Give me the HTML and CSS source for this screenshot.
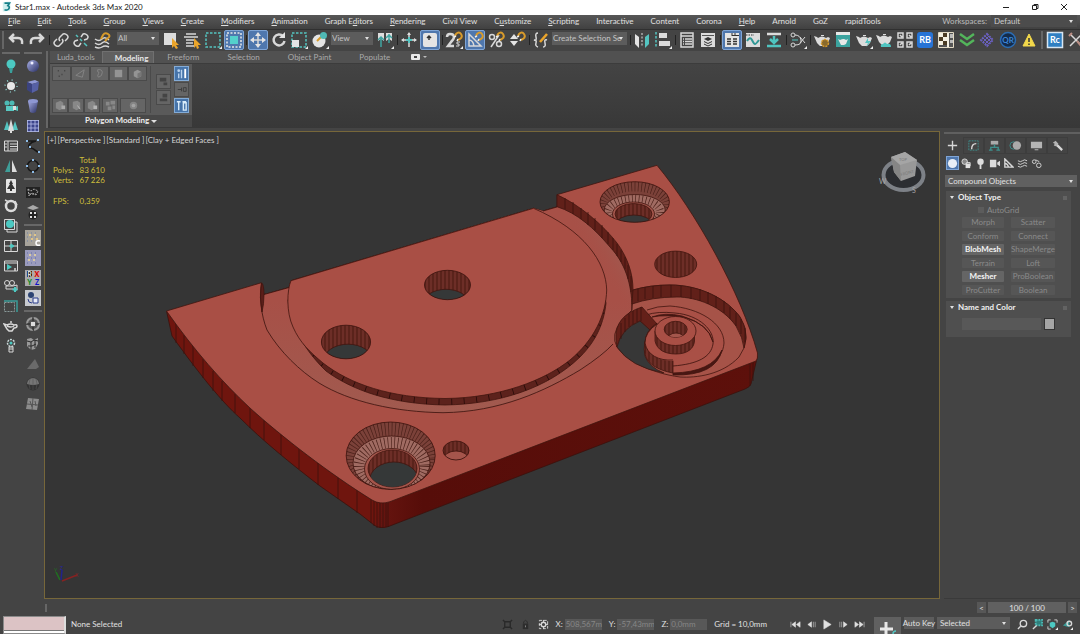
FILE: index.html
```html
<!DOCTYPE html>
<html lang="en">

<head>
    <meta charset="utf-8">
    <title>Star1.max - Autodesk 3ds Max 2020</title>
    <link rel="stylesheet" href="styles.css">
</head>

<body>
    <!-- shared symbols -->
    <svg class="defs" width="0" height="0" aria-hidden="true">
        <defs>
            <linearGradient id="ball" x1="0" y1="0" x2="1" y2="1">
                <stop offset="0" stop-color="#a9b0e6" />
                <stop offset="1" stop-color="#272d60" />
            </linearGradient>
            <symbol id="teapot" viewBox="0 0 18 18">
                <path d="M1 5l3 1 1 1q4-3 8 0l2-1 2 1-2 5-3 3H7L4 12z" />
                <path d="M8 4h3v1H8z" />
            </symbol>
            <symbol id="magnet" viewBox="0 0 18 18">
                <path d="M10 5l1-2q3-3 5 0t-1 5l-2 1" fill="none" stroke="#d99b2b" stroke-width="2" />
                <path d="M9 6l2-1M12 10l1-2" stroke="#eee" stroke-width="1.5" />
            </symbol>
            <symbol id="flyout" viewBox="0 0 18 18">
                <path d="M18 15v3h-3z" fill="#eee" />
            </symbol>
        </defs>
    </svg>

    <header class="titlebar">
        <svg class="logo" viewBox="0 0 12 12"><path d="M1 1l9-1v11l-9 1z" fill="#cfeeee" /><path d="M3 2h6l-2 3q3 1 1 4-2 2-5 1" fill="none" stroke="#16808a" stroke-width="2" /></svg>
        <span class="caption">Star1.max - Autodesk 3ds Max 2020</span>
        <div class="window_buttons">
            <button aria-label="Minimize"><svg viewBox="0 0 8 8"><path d="M1 4.5h6" /></svg></button>
            <button aria-label="Restore"><svg viewBox="0 0 8 8"><path d="M1.5 2.5h4v4h-4zM3 2.5v-1h4v4H6" /></svg></button>
            <button aria-label="Close"><svg viewBox="0 0 8 8"><path d="M1 1l6 6M7 1L1 7" /></svg></button>
        </div>
    </header>

    <nav class="menubar">
        <a href="#"><u>F</u>ile</a>
        <a href="#"><u>E</u>dit</a>
        <a href="#"><u>T</u>ools</a>
        <a href="#"><u>G</u>roup</a>
        <a href="#"><u>V</u>iews</a>
        <a href="#"><u>C</u>reate</a>
        <a href="#"><u>M</u>odifiers</a>
        <a href="#"><u>A</u>nimation</a>
        <a href="#">Graph E<u>d</u>itors</a>
        <a href="#"><u>R</u>endering</a>
        <a href="#">Civil View</a>
        <a href="#">C<u>u</u>stomize</a>
        <a href="#"><u>S</u>cripting</a>
        <a href="#">Interactive</a>
        <a href="#">Content</a>
        <a href="#">Corona</a>
        <a href="#"><u>H</u>elp</a>
        <a href="#">Arnold</a>
        <a href="#">GoZ</a>
        <a href="#">rapidTools</a>
        <label for="workspace">Workspaces:</label>
        <span class="combo workspace"><select id="workspace"><option>Default</option></select></span>
    </nav>

    <div class="toolbar">
        <i class="grip"></i>
        <div class="group">
            <button aria-label="Undo"><svg viewBox="0 0 18 18"><path d="M7 3L3 7l4 4M3 7h8q5 0 4 6" class="line bold" /></svg></button>
            <button aria-label="Redo"><svg viewBox="0 0 18 18"><path d="M11 3l4 4-4 4M15 7H7q-5 0-4 6" class="line bold" /></svg></button>
        </div>
        <i class="sep"></i>
        <div class="group">
            <button aria-label="Link"><svg viewBox="0 0 18 18"><g class="line wide"><path d="M8 10q-2-2 0-4l3-3q2-1 4 1t0 4l-2 2" /><path d="M10 8q2 2 0 4l-3 3q-2 1-4-1t0-4l2-2" /></g></svg></button>
            <button aria-label="Unlink"><svg viewBox="0 0 18 18"><path d="M9 6l2-3q2-1 4 1t0 4l-3 1M9 12l-2 3q-2 1-4-1t0-4l3-1" class="line wide" /><path d="M4 4l2 2M8 8l2 2M12 12l3 3" stroke="#54c4c0" stroke-width="1.5" /></svg></button>
            <button aria-label="Bind to Space Warp"><svg viewBox="0 0 18 18"><path d="M2 8q4 3 7 0t7 1M2 12q4 3 7 0t7 1M2 16q4 2 7 0t7 0" class="line wide" /><path d="M8 8l2-4q2-3 5-1t0 4l-3 3" fill="none" stroke="#d99b2b" stroke-width="2" /></svg></button>
        </div>
        <span class="combo"><select aria-label="Selection filter"><option>All</option></select></span>
        <div class="group">
            <button aria-label="Select Object"><svg viewBox="0 0 18 18"><path d="M2 2h12v12H2z" fill="#dcdcdc" /><path d="M10 7v10l2-2 2 3 2-1-2-3h3z" fill="#eba52b" /></svg></button>
            <button aria-label="Select by Name"><svg viewBox="0 0 18 18"><path d="M3 3h10M1 6h14M3 9h9M3 12h7M3 15h8" class="line wide" /><path d="M11 7v10l2-2 1 3 2-1-1-3h3z" fill="#eba52b" /></svg></button>
            <button aria-label="Rectangular Selection"><svg viewBox="0 0 18 18"><path d="M2 2h14v14H2z" fill="none" stroke="#54c4c0" stroke-width="1.5" stroke-dasharray="2.5 1.5" /><use href="#flyout" /></svg></button>
            <button class="active" aria-label="Window Crossing"><svg viewBox="0 0 18 18"><path d="M2 2h14v14H2z" fill="none" stroke="#e8e8e8" stroke-width="1.5" stroke-dasharray="2 1.5" /><path d="M5 5h8v8H5z" fill="#54d0cc" /></svg></button>
        </div>
        <i class="sep"></i>
        <div class="group">
            <button class="active" aria-label="Move"><svg viewBox="0 0 18 18"><path d="M9 3v12M3 9h12" class="line wide" /><path d="M9 1l3 4H6zM9 17l3-4H6zM1 9l4-3v6zM17 9l-4-3v6z" fill="#e4e4e4" /></svg></button>
            <button aria-label="Rotate"><svg viewBox="0 0 18 18"><path d="M13 5a5.5 5.5 0 1 0 1.500 5" class="line bold" /><path d="M15 1v6H9z" fill="#e4e4e4" /></svg></button>
            <button aria-label="Scale"><svg viewBox="0 0 18 18"><path d="M2 2h14v14H2z" fill="none" stroke="#54c4c0" stroke-width="1.5" stroke-dasharray="2.5 1.5" /><path d="M2 9h7v7H2z" fill="#e4e4e4" /><use href="#flyout" /></svg></button>
            <button aria-label="Place"><svg viewBox="0 0 18 18"><circle cx="8" cy="10" r="6.5" fill="#e4e4e4" /><path d="M6 10l5-5" stroke="#d99b2b" stroke-width="2" /><circle cx="12.5" cy="4.5" r="3.5" fill="#4fb9b5" /><use href="#flyout" /></svg></button>
        </div>
        <span class="combo"><select aria-label="Reference coordinate system"><option>View</option></select></span>
        <div class="group">
            <button aria-label="Use Pivot Point Center"><svg viewBox="0 0 18 18"><path d="M2 2h6v8l-3-2-3 2zM10 2h6v8l-3-2-3 2z" fill="#dcdcdc" /><path d="M5 6v10M2 9l3-3 3 3M13 3v9M10 7l3-3 3 3" fill="none" stroke="#3fa5a1" stroke-width="1.5" /><use href="#flyout" /></svg></button>
        </div>
        <i class="sep"></i>
        <div class="group">
            <button aria-label="Manipulate"><svg viewBox="0 0 18 18"><path d="M9 2v14M2 9h14" stroke="#dcdcdc" stroke-width="1.5" /><path d="M9 6v6M6 9h6" stroke="#54c4c0" stroke-width="2" /><path d="M7 4h4L9 1zM1 9l3-2v4zM17 9l-3-2v4z" fill="#dcdcdc" /></svg></button>
            <button class="active" aria-label="Keyboard Override"><svg viewBox="0 0 18 18"><rect x="2" y="2" width="14" height="14" rx="2" fill="#e4e4e4" /><path d="M8 9V5M6 7l2-2 2 2" fill="none" stroke="#333" stroke-width="1.5" /></svg></button>
        </div>
        <i class="sep"></i>
        <div class="group">
            <button aria-label="Snaps Toggle"><svg viewBox="0 0 18 18"><path d="M2 6q0-3 3-3 4 0 4 3 0 2-3 5l-3 4h6" class="line bold" /><path d="M15 11h-3v2h2v2h-3" class="line" /><use href="#magnet" /><use href="#flyout" /></svg></button>
            <button class="active" aria-label="Angle Snap"><svg viewBox="0 0 18 18"><path d="M3 3v12h12zM3 9q4 0 5 6" class="line wide" /><use href="#magnet" /></svg></button>
            <button aria-label="Percent Snap"><svg viewBox="0 0 18 18"><circle cx="5" cy="6" r="2.500" class="line wide" /><circle cx="12" cy="13" r="2.500" class="line wide" /><path d="M12 4L4 16" class="line wide" /><use href="#magnet" /></svg></button>
            <button aria-label="Spinner Snap"><svg viewBox="0 0 18 18"><path d="M6 3l4 5H2zM6 15l4-5H2z" fill="#e4e4e4" /><use href="#magnet" /></svg></button>
        </div>
        <i class="sep"></i>
        <div class="group">
            <button aria-label="Edit Named Selection Sets"><svg viewBox="0 0 18 18"><path d="M6 2Q3 2 4 6T2 9q3 0 2 3t2 4M11 16q3 0 2-4t2-3" class="line wide" /><path d="M8 11l7-8" stroke="#eba52b" stroke-width="2.5" /></svg></button>
        </div>
        <span class="combo"><select aria-label="Named selection sets"><option>Create Selection Se</option></select></span>
        <i class="sep"></i>
        <div class="group">
            <button aria-label="Mirror"><svg viewBox="0 0 18 18"><path d="M2 3l4 3v11l-4-4z" fill="#e4e4e4" /><path d="M16 3l-4 3v11l4-4z" fill="#54c4c0" /><path d="M9 2v14" stroke="#ddd" stroke-dasharray="2 1.5" /></svg></button>
            <button aria-label="Align"><svg viewBox="0 0 18 18"><path d="M2 1v16" stroke="#54c4c0" stroke-width="1.5" stroke-dasharray="2.5 1.5" /><path d="M5 2h8v5H5zM5 10h11v5H5z" fill="#dcdcdc" /><use href="#flyout" /></svg></button>
        </div>
        <i class="sep"></i>
        <div class="group">
            <button aria-label="Scene Explorer"><svg viewBox="0 0 18 18"><path d="M3 2h12v14H3zM3 5h12M7 8h7M7 10.5h7M7 13h7M5 8h1M5 10.5h1M5 13h1" class="line wide" /></svg></button>
            <button aria-label="Layer Explorer"><svg viewBox="0 0 18 18"><path d="M2 2h14v14H2z" fill="#dcdcdc" /><path d="M3 4.500h12" stroke="#555" /><path d="M9 6l4 2-4 2-4-2zM5 10l4 2 4-2v1l-4 2-4-2zM5 12.500l4 2 4-2v1l-4 2-4-2z" fill="#333" /></svg></button>
        </div>
        <i class="sep"></i>
        <div class="group">
            <button class="active" aria-label="Toggle Ribbon"><svg viewBox="0 0 18 18"><path d="M2 2h14v14H2z" fill="#e4e4e4" /><path d="M4 8h4M4 10.5h4M4 13h4M10 8h4M10 10.5h4M10 13h4" stroke="#333" stroke-width="1.5" /><path d="M9 2v3M12 2v3M9 4.5h7" stroke="#333" /></svg></button>
            <button aria-label="Curve Editor"><svg viewBox="0 0 18 18"><path d="M2 2h14v14H2z" fill="#dcdcdc" /><path d="M2 4h8" stroke="#333" stroke-dasharray="1.5 1" /><path d="M3 10q3-5 5-1t3 4 4-4" fill="none" stroke="#319895" stroke-width="2" /></svg></button>
            <button aria-label="Schematic View"><svg viewBox="0 0 18 18"><path d="M2 3h14" stroke="#dcdcdc" stroke-width="2.5" /><path d="M2 15h14M9 5v6M5 8l4 4 4-4" fill="none" stroke="#4fc4c0" stroke-width="2.5" /></svg></button>
        </div>
        <i class="sep"></i>
        <div class="group">
            <button aria-label="Material Editor"><svg viewBox="0 0 18 18"><circle cx="4" cy="4" r="2" class="line" /><circle cx="4" cy="14" r="2" class="line" /><path d="M6 4q5 0 6 5t-6 5M11 6l5 6M16 6l-5 6" class="line" /><path d="M3 9h6" stroke="#54c4c0" /><use href="#flyout" /></svg></button>
        </div>
        <i class="sep"></i>
        <div class="group">
            <button aria-label="Render Setup"><svg viewBox="0 0 18 18" fill="#dcdcdc"><use href="#teapot" /><circle cx="12" cy="12" r="3.5" fill="#8a6a2c" stroke="#d99b2b" stroke-width="1.5" stroke-dasharray="2 1" /></svg></button>
            <button aria-label="Rendered Frame Window"><svg viewBox="0 0 18 18" fill="#e8e8e8"><path d="M2 2h14v14H2z" fill="#3ba39f" /><path d="M2 1h14v3H2z" /><path d="M4 8l2 1q4-2 6 0l2-1-2 5-2 1H7z" /></svg></button>
            <button aria-label="Render Production"><svg viewBox="0 0 18 18" fill="#dcdcdc"><use href="#teapot" /><path d="M13 7l-3 5h3l-2 4 5-6h-3z" fill="#54c4c0" /><use href="#flyout" /></svg></button>
            <button aria-label="Render in Cloud"><svg viewBox="0 0 18 18" fill="#dcdcdc"><use href="#teapot" y="-1" /><path d="M6 16q-1-3 2-3 2-3 4 0 4-1 4 3z" fill="#4fc4c0" /></svg></button>
            <button aria-label="Tile"><svg viewBox="0 0 18 18"><path d="M2 2h5v5H2zM11 2h5v5h-5zM2 11h5v5H2zM11 11h5v5h-5zM4 4l2 2M13 4l2 2M4 14l2-2M13 14l2-2" class="line wide" /></svg></button>
            <button aria-label="RB"><svg viewBox="0 0 18 18"><rect x="1" y="1" width="16" height="16" rx="3" fill="#2774d6" /><text x="9" y="12" class="badge">RB</text></svg></button>
            <button aria-label="Checker"><svg viewBox="0 0 18 18"><path d="M1.5 1.5h15v15h-15z" fill="#555" stroke="#e2d9c4" /><path d="M2 2h4v4H2zM6 6h4v4H6zM2 10h4v4H2zM10 2h2v14h-2z" fill="#f4f0e2" /><path d="M6 2h4v4H6zM2 6h4v4H2zM6 10h4v4H6z" fill="#4b3b24" /><path d="M13 3h3v4h-3zM13 9h3v3h-3z" fill="#bbb" /></svg></button>
            <button aria-label="Collapse"><svg viewBox="0 0 18 18"><path d="M2 3l7 5 7-5M2 9l7 5 7-5" fill="none" stroke="#53b55b" stroke-width="2.5" /></svg></button>
            <button aria-label="Pattern"><svg viewBox="0 0 18 18"><path d="M9 3l6 6-6 6-6-6z" fill="none" stroke="#6a60c0" stroke-width="2" stroke-dasharray="2 1" /><path d="M5 7l6 6M7 5l6 6M5 11l6-6M7 13l6-6" stroke="#6a60c0" /></svg></button>
            <button aria-label="QR"><svg viewBox="0 0 18 18"><circle cx="9" cy="9" r="7.5" fill="#142c4c" stroke="#2b6db4" stroke-width="1.5" /><text x="9" y="12" class="badge qr">QR</text></svg></button>
            <button aria-label="Warning"><svg viewBox="0 0 18 18"><path d="M9 3l6 12H3z" fill="#f2d84b" stroke="#f2d84b" /><path d="M9 7v4M9 12.5v1.500" stroke="#333" stroke-width="1.5" /></svg></button>
        </div>
        <i class="grip"></i>
        <div class="group">
            <button aria-label="Rc"><svg viewBox="0 0 18 18"><path d="M1.5 1.5h15v15h-15z" fill="#2f7fc2" stroke="#d8e6f2" stroke-width="1.5" /><text x="9" y="12" class="badge">Rc</text></svg></button>
            <button aria-label="Tools"><svg viewBox="0 0 18 18"><path d="M3 3l12 12M15 3L3 15" class="line wide" /><path d="M2 5l3-3M10 10l5 6" stroke="#b98c82" stroke-width="2" /></svg></button>
        </div>
    </div>

    <main class="workspace_area">
        <div class="side_tools">
            <div class="side_column">
                <i class="bar"></i>
                <button aria-label="Light"><svg viewBox="0 0 16 16"><circle cx="8" cy="6" r="4.5" fill="#4cc9c2" /><path d="M6 10h4l-1 5H7z" fill="#3aa09c" /></svg></button>
                <button aria-label="Sun"><svg viewBox="0 0 16 16"><circle cx="8" cy="8" r="4" fill="#e8e8e8" /><circle cx="8" cy="8" r="6" fill="none" stroke="#8ccfcc" stroke-width="1.5" stroke-dasharray="1 3.7" /></svg></button>
                <button aria-label="Camera"><svg viewBox="0 0 16 16"><circle cx="4" cy="5" r="2.5" fill="#4cb9b4" /><circle cx="9" cy="5" r="2.5" fill="#4cb9b4" /><path d="M3 8h8v5H3zM12 9l3-1v5l-3-1z" fill="#58c8c2" /><path d="M10 8h3v4h-3z" fill="#ddd" /></svg></button>
                <button aria-label="Forest"><svg viewBox="0 0 16 16"><path d="M4 3l3 9H1zM12 3l3 9H9z" fill="#54c4c0" /><path d="M8 1l3 12H5zM7 13h2v2H7z" fill="#dcdcdc" /></svg></button>
                <button aria-label="List"><svg viewBox="0 0 16 16"><path d="M1.5 3h13v10h-13zM5 3v10M7 6h7M7 8.5h7M7 11h7M2 6h2M2 9h2" class="line" /></svg></button>
                <button aria-label="Mirror trees"><svg viewBox="0 0 16 16"><path d="M7 2v12H2z" fill="#3f9e99" /><path d="M9 2v12h5z" fill="#dcdcdc" /></svg></button>
                <button aria-label="Tree card"><svg viewBox="0 0 16 16"><rect x="3" y="1" width="10" height="14" rx="1" fill="#e4e4e4" /><path d="M8 2l2 4-1 0 3 5H9v2H7v-2H4l3-5H6z" fill="#333" /></svg></button>
                <button aria-label="Ring"><svg viewBox="0 0 16 16"><circle cx="8" cy="8" r="5" fill="none" stroke="#dcdcdc" stroke-width="2.5" /><path d="M2 2l4 2M12 3l2 4" class="line wide" /></svg></button>
                <button aria-label="Sphere stack"><svg viewBox="0 0 16 16"><path d="M1.5 1.5h10v10h-10zM12 4h2v10H4v-2" class="line" /><circle cx="7" cy="6" r="4" fill="#4cc9c2" /></svg></button>
                <button aria-label="Four views"><svg viewBox="0 0 16 16"><path d="M1.5 2.5h13v11h-13zM8 3v10M2 8h12" class="line" /><path d="M6 8h5M8 6l3 2-3 2z" fill="#4cc9c2" stroke="#4cc9c2" /></svg></button>
                <button aria-label="Playback"><svg viewBox="0 0 16 16"><path d="M1.5 3h13v10h-13zM2 5h12" class="line" /><path d="M4 6l5 3-5 3z" fill="#4cc9c2" /><path d="M12 10v3" class="line wide" /></svg></button>
                <button aria-label="Add camera"><svg viewBox="0 0 16 16"><circle cx="4" cy="5" r="2.5" class="line" /><circle cx="9" cy="5" r="2.5" class="line" /><path d="M3 8h7l4-1v5l-4-1H3z" class="line" /><path d="M12 9v5M9.5 11.5h5" stroke="#4cc9c2" stroke-width="2" /></svg></button>
                <button aria-label="Frame"><svg viewBox="0 0 16 16"><path d="M1.5 4.5h10v9h-10z" fill="none" stroke="#8a9a9a" stroke-dasharray="2 1" /><path d="M1 3h13v11" fill="none" stroke="#3a9c98" stroke-width="1.5" /></svg></button>
                <button aria-label="Teapot"><svg viewBox="0 0 16 16"><path d="M1 6l3 1q4-2 7 0 3-1 3 1t-3 2l-2 3H6L4 11zM4 8q4 2 7 0M7 4h2" class="line wide" /></svg></button>
                <button aria-label="Bulb"><svg viewBox="0 0 16 16"><circle cx="8" cy="5" r="3.5" fill="none" stroke="#c8d8d8" stroke-width="1.5" stroke-dasharray="2 1" /><circle cx="8" cy="5" r="1.5" fill="#4cc9c2" /><path d="M6 9h4v5H6zM6 11h4" class="line" /></svg></button>
            </div>
            <div class="side_column">
                <i class="bar"></i>
                <button aria-label="Sphere"><svg viewBox="0 0 16 16"><circle cx="8" cy="8" r="6" fill="url(#ball)" /><circle cx="7" cy="5" r="1.5" fill="#eef" /></svg></button>
                <button aria-label="Box"><svg viewBox="0 0 16 16"><path d="M2 4l8-2 4 2-7 2z" fill="#8f98d6" /><path d="M2 4l5 2v9l-5-3z" fill="#3b4380" /><path d="M7 6l7-2-1 8-6 3z" fill="#5660a5" /></svg></button>
                <button aria-label="Cylinder"><svg viewBox="0 0 16 16"><path d="M3 3l2 11q3 2 6 0l2-11z" fill="url(#ball)" /><ellipse cx="8" cy="3" rx="5" ry="2" fill="#8e97d2" /></svg></button>
                <button aria-label="Plane"><svg viewBox="0 0 16 16"><path d="M2 2h12v12H2z" fill="#3c458c" /><path d="M2 2.5h12M2 6h12M2 10h12M2 13.5h12M2.5 2v12M6 2v12M10 2v12M13.5 2v12" stroke="#b7bfe8" stroke-width=".8" /></svg></button>
                <button aria-label="Line"><svg viewBox="0 0 16 16"><path d="M2 3h9C5 4 1 9 6 10s4 4 8 4" fill="none" stroke="#181818" stroke-width="1.5" /><path d="M1 2h2v2H1zM12 1h2v2h-2zM13 13h2v2h-2zM4 8h2v2H4z" fill="#8dbce8" /></svg></button>
                <button aria-label="Circle"><svg viewBox="0 0 16 16"><circle cx="8" cy="8" r="5.5" fill="none" stroke="#181818" stroke-width="1.5" /><path d="M7 1h2v2H7zM7 13h2v2H7zM1 7h2v2H1zM13 7h2v2h-2z" fill="#8dbce8" /></svg></button>
                <i class="bar"></i>
                <button aria-label="Scatter box"><svg viewBox="0 0 16 16"><path d="M1 3h14v11H1z" fill="#222" /><path d="M3 5l3 2 3-2 4 2-2 4-4-2-3 3zM4 10h7" fill="none" stroke="#aaa" stroke-dasharray="2 1" /></svg></button>
                <button aria-label="Scatter"><svg viewBox="0 0 16 16"><path d="M8 1l6 3-6 2-6-2z" fill="#aaa" /><circle cx="8" cy="11" r="4.5" fill="#222" /><path d="M5 8h2v2H5zM9 8h2v2H9zM5 12h2v2H5zM9 12h2v2H9z" fill="#ddd" /></svg></button>
                <i class="bar"></i>
                <button aria-label="Noise C"><svg viewBox="0 0 16 16"><path d="M0 0h16v16H0z" fill="#a8a49b" /><path d="M2 3h12M2 7h12M2 11h8" stroke="#6c7fa2" stroke-dasharray="1 3" /><path d="M4 5h10M6 9h8" stroke="#e0c58a" stroke-width="2" stroke-dasharray="2 3" /><path d="M15 11q-4-1-4 2t4 2" fill="none" stroke="#fff" stroke-width="1.5" /></svg></button>
                <button aria-label="Noise"><svg viewBox="0 0 16 16"><path d="M0 0h16v16H0z" fill="#9a9bbd" /><path d="M2 3h12M2 8h12M2 13h12" stroke="#5e6aa2" stroke-dasharray="1 3" /><path d="M4 5h10M3 10h10" stroke="#d9c9a2" stroke-width="2" stroke-dasharray="2 3" /></svg></button>
                <button aria-label="RXYZ"><svg viewBox="0 0 16 16"><path d="M0 0h16v16H0z" fill="#a9a9ad" /><path d="M2 1h5v6H2z" fill="#111" /><text x="4.5" y="7" class="axis" fill="#ddd">R</text><path d="M9 1h6v6H9z" fill="#c99" /><text x="12" y="7" class="axis" fill="#c00">X</text><text x="4.5" y="15" class="axis" fill="#0a8a1a">Y</text><text x="12" y="15" class="axis" fill="#11c">Z</text></svg></button>
                <button aria-label="Clone"><svg viewBox="0 0 16 16"><path d="M0 0h16v16H0z" fill="#c7cacf" /><circle cx="6" cy="5" r="3" fill="#2d4473" /><path d="M8 8h5v5H8z" fill="#e8ecf8" stroke="#2a3c8a" /><path d="M3 9q0 4 4 4" fill="none" stroke="#2a3c8a" /></svg></button>
                <i class="bar"></i>
                <button aria-label="Wheel"><svg viewBox="0 0 16 16"><circle cx="8" cy="8" r="6" fill="#555" stroke="#999" stroke-width="2" stroke-dasharray="8 1.4" /><path d="M6 6h4v4H6z" fill="#ddd" /><path d="M8 2v3M8 11v3M2 8h3M11 8h3" stroke="#222" /></svg></button>
                <button aria-label="Cubes"><svg viewBox="0 0 16 16"><path d="M2 3l4-1 3 2 4-2v6l-3 5-4 1-4-4z" fill="#999" /><path d="M2 5l4 1 3-2 4 1M3 10l4 0 4-2M6 6v8M10 4v8" stroke="#2a2a2a" fill="none" /></svg></button>
                <button aria-label="Prism"><svg viewBox="0 0 16 16"><path d="M2 13l8-10 4 8-3 2z" fill="#6a6a6a" /></svg></button>
                <button aria-label="Dark sphere"><svg viewBox="0 0 16 16"><circle cx="8" cy="8" r="6.5" fill="#333" /><path d="M2 8a6 6 0 0 1 12 0q-6 2-12 0z" fill="#757575" /><path d="M8 2v12M5 3q-2 5 0 10M11 3q2 5 0 10" fill="none" stroke="#555" stroke-width=".6" /></svg></button>
                <button aria-label="Slabs"><svg viewBox="0 0 16 16"><path d="M3 2l11 1-2 11-11-1z" fill="#8c8c8c" /><path d="M8 2L7 14M2 8l11 1M5 5l2 6M10 5l1 5" stroke="#555" /></svg></button>
            </div>
        </div>

        <section class="ribbon">
            <div class="tabs">
                <a href="#">Luda_tools</a>
                <a href="#" class="selected">Modeling</a>
                <a href="#">Freeform</a>
                <a href="#">Selection</a>
                <a href="#">Object Paint</a>
                <a href="#">Populate</a>
                <button class="toggle" aria-label="Minimize ribbon"><svg viewBox="0 0 18 6"><rect width="9" height="6" rx="1" fill="#e8e8e8" /><path d="M3 2h3v2H3z" fill="#444" /><path d="M12 2h4l-2 2z" fill="#bbb" /></svg></button>
            </div>
            <div class="panel">
                <div class="panel_tools">
                    <div class="poly_tools">
                        <div class="strip">
                            <button aria-label="Vertex"><svg viewBox="0 0 14 14"><path d="M3 4h1M7 8h1M10 4h1M4 10h1" stroke="#3c3c3c" stroke-width="1.5" /></svg></button>
                            <button aria-label="Edge"><svg viewBox="0 0 14 14"><path d="M2 9l9-6-2 8z" fill="none" stroke="#858585" /></svg></button>
                            <button aria-label="Border"><svg viewBox="0 0 14 14"><path d="M5 3q5-1 5 3t-4 5q-2-1 0-4 1-2-1-2z" fill="none" stroke="#858585" /></svg></button>
                            <button aria-label="Polygon"><svg viewBox="0 0 14 14"><path d="M3 3h8v8H3z" fill="#949494" /></svg></button>
                            <button aria-label="Element"><svg viewBox="0 0 14 14"><path d="M3 5l4-2 4 2v5l-4 2-4-2z" fill="#949494" /><path d="M7 7v5l4-2V5z" fill="#777" /></svg></button>
                        </div>
                        <div class="strip lower">
                            <button aria-label="Convert"><svg viewBox="0 0 14 14"><path d="M2 4l5-2 3 2v6l-4 2-4-2z" fill="#888" /><path d="M8 7h4v4H8z" fill="#aaa" /></svg></button>
                            <button aria-label="Modify"><svg viewBox="0 0 14 14"><path d="M3 3l5-1 3 2v6l-4 2-4-2z" fill="#888" /><path d="M8 7l3 4" stroke="#bbb" /></svg></button>
                            <button aria-label="Stack"><svg viewBox="0 0 14 14"><path d="M2 4l5-2 3 2v6l-4 2-4-2z" fill="#888" /><path d="M8 7h4v4H8z" fill="#b5b5b5" /></svg></button>
                            <button class="spaced" aria-label="Preview"><svg viewBox="0 0 14 14"><path d="M2 3h4v4H2zM7 2h5v4H7zM4 8h4v4H4zM9 7h3v4H9z" fill="#888" /></svg></button>
                            <button class="large" aria-label="Soft selection"><svg viewBox="0 0 14 14"><circle cx="7" cy="7" r="4" fill="#858585" /><circle cx="7" cy="7" r="2" fill="#a2a2a2" /></svg></button>
                        </div>
                    </div>
                    <div class="strip stack">
                        <button aria-label="Pin"><svg viewBox="0 0 14 14"><path d="M3 3h7v4H3zM7 8h4v3H7z" fill="#444" /></svg></button>
                        <button aria-label="Unpin"><svg viewBox="0 0 14 14"><path d="M6 3h5v4H6zM3 8h8v3H3z" fill="#444" /></svg></button>
                    </div>
                    <div class="strip stack">
                        <button class="blue" aria-label="Show end result"><svg viewBox="0 0 14 14"><circle cx="4" cy="4" r="1.5" fill="#b9d3ee" /><path d="M4 7v5M7 3v9" stroke="#b9d3ee" stroke-width="1.5" /><path d="M11 2v10" stroke="#fff" stroke-width="2" /></svg></button>
                        <button aria-label="Back"><svg viewBox="0 0 14 14"><path d="M3 7h4M7 5v4M9 5h3v4H9z" fill="none" stroke="#3d3d3d" /></svg></button>
                        <button class="blue" aria-label="Pin stack"><svg viewBox="0 0 14 14"><path d="M2 3h4M4 3v9M9 4h3v8H9zM8 3h4" fill="none" stroke="#d9ecfa" stroke-width="1.5" /></svg></button>
                    </div>
                </div>
                <div class="panel_title">Polygon Modeling <i class="down"></i></div>
            </div>
        </section>

        <section class="viewport">
            <svg class="scene" viewBox="45 132 894 466" role="img" aria-label="Star1 plate, clay shading with edges">
                <defs>
                    <linearGradient id="front" x1="0" x2="1" y1="0" y2="0">
                        <stop offset="0" stop-color="#681510" />
                        <stop offset=".12" stop-color="#560d09" />
                        <stop offset="1" stop-color="#5d100b" />
                    </linearGradient>
                    <linearGradient id="groove" gradientUnits="userSpaceOnUse" x1="0" y1="300" x2="0" y2="412">
                        <stop offset="0" stop-color="#a75047" />
                        <stop offset="1" stop-color="#a15a4f" />
                    </linearGradient>
                    <linearGradient id="groove_right" gradientUnits="userSpaceOnUse" x1="595" y1="262" x2="630" y2="240">
                        <stop offset="0" stop-color="#a75047" stop-opacity="0" />
                        <stop offset="1" stop-color="#97655a" />
                    </linearGradient>
                    <pattern id="wall" width="4" height="40" patternUnits="userSpaceOnUse">
                        <path d="M0 0h4v40H0z" fill="#6d2e27" />
                        <path d="M1 0v40" stroke="#46180f" />
                    </pattern>
                    <clipPath id="hole_a"><ellipse cx="447.5" cy="285" rx="23" ry="14.7" /></clipPath>
                    <clipPath id="hole_b"><ellipse cx="346" cy="342" rx="24.6" ry="16.8" /></clipPath>
                    <clipPath id="hole_s"><ellipse cx="456" cy="450.5" rx="13" ry="9.5" /></clipPath>
                    <clipPath id="sink_a"><ellipse cx="390.7" cy="455.7" rx="44.5" ry="33.7" /></clipPath>
                    <clipPath id="sink_a_in"><ellipse cx="392.5" cy="468.5" rx="24.5" ry="18.5" /></clipPath>
                    <clipPath id="sink_b"><ellipse cx="634.7" cy="202" rx="34.7" ry="20.3" /></clipPath>
                    <clipPath id="sink_b_in"><ellipse cx="633.5" cy="214" rx="18.5" ry="10.5" /></clipPath>
                    <clipPath id="boss_in"><ellipse cx="675.7" cy="329.3" rx="11.5" ry="8" /></clipPath>
                    <clipPath id="pad_wall"><path id="pad_wall_shape" d="M288 300C290 322 302 348 326 371C352 390 390 404 445 405C500 404 548 388 580 357C597 340 604 322 606 303L600 280H300z" /></clipPath>
                </defs>

                <!-- sides -->
                <path d="M166.5 311L172 336C200 375 222 402 240 418C262 440 290 463 320 486L360 514L374 525Q379 529 388 526L388 502L372 500C330 474 282 437 250 408C222 382 194 350 166.5 311z" fill="#6f150e" />
                <path d="M379 502.5L756 360.5L757.5 356L751 384Q750 387 745 389L388 526.7Q383 529 377 527z" fill="url(#front)" />
                <path d="M176 323v20M184 335v19M193 346v20M203 359v19M213 371v20M222 381v20M235 394v19M250 408v20M264 420v20M281 434v21M299 448v21M318 463v22M338 477v22M357 490v23M371 499v24M374 501v25M377 502v26M380 503v25M383 503v25M386 502v25M388 502v25M750 363v23M753 362v19" class="edge" />
                <path d="M166.5 311L172 336C200 375 222 402 240 418C262 440 290 463 320 486L360 514L374 525Q379 529 388 526.7L745 389Q750 387 751 384L757.5 356" class="edge" />

                <!-- top face -->
                <path d="M166.5 311L261.5 282.7L264 294.5L289 287.5L291 280.7L533.5 208.3L543 211L557 206.7V194.7L657 165.3C695 211 741 293 757.5 353Q758 359 756 361L390 501.7Q380 505 372 500C330 474 282 437 250 408C222 382 194 350 166.5 311z" fill="#a94f45" class="outline" />

                <!-- groove floor -->
                <path d="M261.5 284C259 296 261 315 267 330C280 352 300 371 319 383C350 402 395 412 443 412.7C500 412 545 391 580 370Q603 355 613 344L632 310C634 285 625 262 610 245C596 228 575 211 557 207L543 211L533.5 208.3L291 281L289 287.5L264 294.5z" fill="url(#groove)" />
                <path d="M632 300C634 285 625 262 610 245C596 228 575 211 557 207L543 211C570 225 600 250 606 285L620 320z" fill="url(#groove_right)" />
                <path d="M261.5 283C259 296 261 315 267 330C280 352 300 371 319 383C350 402 395 412 443 412.7C500 412 545 391 580 370Q603 355 613 344" class="edge" />
                <path d="M261.5 283Q264 284 264 294.5Q264 304 262 312Q259 297 261.5 283z" fill="#5a1e19" class="outline" />
                <path d="M264 294.5L289 287.5M543 211L557 207" class="edge" />

                <!-- raised disc -->
                <use href="#pad_wall_shape" fill="#5c221c" class="outline" />
                <path d="M288 300C290 322 303 345 323 363C350 384 390 398 445 398.5C500 398 545 380 570 360C594 340 606 315 606.7 290" fill="none" stroke="#260b09" stroke-width="17" stroke-dasharray=".8 11.5" clip-path="url(#pad_wall)" />
                <path d="M291 280.7C287 290 286 312 293 327C300 343 310 352 323 363C350 384 390 398 445 398.5C500 398 545 380 570 360C594 340 606 315 606.7 290C606 262 584 230 533.5 208.3z" fill="#a94f45" class="outline" />

                <!-- right groove wall -->
                <path d="M557 194.7C580 205 603 225 617 243C628 258 633 274 633 290L632 310C632 290 628 266 610 247C594 228 577 213 557 206.7z" fill="#612019" class="outline" />
                <path d="M565 198v11M573 202v12M581 208v11M588 212v13M595 218v12M602 225v13M608 232v12M613 238v12M617 244v12M621 250v12M625 257v12M628 265v14M631 276v16" class="edge" />

                <!-- round pocket -->
                <path d="M633 290Q650 285 670 285C700 285 727 299 740 317Q753 338 739 357C722 375 696 378 680 377C650 373 626 360 617 347Q610 335 622 320L632 310z" fill="#a65348" class="outline" />
                <path d="M633 290Q650 285 670 285C700 285 727 299 740 317Q749 331 744 348Q743 338 736 326C722 306 696 297 677 297Q652 297 632 304z" fill="#612019" class="outline" />
                <path d="M638 289v12M645 287v12M653 286v12M661 285v12M671 285v12M681 286v11M691 287v12M700 289v12M708 292v12M716 296v12M724 301v12M730 307v12M736 313v13M741 319v15M745 328v14" class="edge" />
                <path d="M647 310Q657 306 670 306C699 308 724 323 724 343C723 361 703 374 673 374" fill="#a95046" class="outline" />
                <path d="M646 315Q658 311 675 313C700 315 715 331 713 344C711 357 698 364 673 366" class="edge" />
                <path d="M652 317Q665 312 682 316Q709 324 713 342Q708 324 686 318Q667 314 652 317z" fill="#491713" class="outline" />
                <path d="M673 373Q712 372 722 350Q716 376 673 375z" fill="#491713" class="outline" />
                <path d="M616 340Q614 316 642 307L657 324L650 330L640 321Q622 327 617 347z" fill="#642019" class="outline" />
                <path d="M617 347Q621 329 640 321L650 330Q642 342 645 356Q649 367 664 373Q630 367 617 347z" fill="#373737" class="outline" />
                <path d="M621 323v16M625 318v14M629 314v13M633 311v13M637 309v13M641 307v14" class="edge" />
                <path d="M657 323Q645 331 645 343V353C646 363 657 370 673 373V360Q648 356 645 343z" fill="url(#wall)" class="outline" />
                <path d="M657 324Q645 332 645 343C647 355 659 361 673 361L693 350L690 324z" fill="#a94f45" />
                <path d="M657 324Q645 332 645 343C647 355 659 361 673 360" class="edge" />
                <path d="M655 331V341C657 350 665 354 676 354C688 354 694 348 694.5 341V331z" fill="url(#wall)" class="outline" />
                <ellipse cx="675.5" cy="331" rx="20.5" ry="14.5" fill="#a94f45" class="outline" />
                <ellipse cx="675.7" cy="329.3" rx="11.5" ry="8" fill="url(#wall)" class="outline" />
                <ellipse cx="676" cy="340" rx="9" ry="7" fill="#a4564c" class="outline" clip-path="url(#boss_in)" />

                <!-- through holes -->
                <ellipse cx="447.5" cy="285" rx="23" ry="14.7" fill="url(#wall)" />
                <ellipse cx="446" cy="304" rx="23" ry="14.7" fill="#353838" class="outline" clip-path="url(#hole_a)" />
                <ellipse cx="447.5" cy="285" rx="23" ry="14.7" class="edge" />
                <ellipse cx="346" cy="342" rx="24.6" ry="16.8" fill="url(#wall)" />
                <ellipse cx="348" cy="361" rx="24.6" ry="16.8" fill="#353838" class="outline" clip-path="url(#hole_b)" />
                <ellipse cx="346" cy="342" rx="24.6" ry="16.8" class="edge" />
                <ellipse cx="675.7" cy="264.3" rx="21" ry="13.2" fill="url(#wall)" class="outline" />
                <ellipse cx="456" cy="450.5" rx="13" ry="9.5" fill="url(#wall)" />
                <ellipse cx="456" cy="460" rx="13" ry="9" fill="#a5554b" class="outline" clip-path="url(#hole_s)" />
                <ellipse cx="456" cy="450.5" rx="13" ry="9.5" class="edge" />

                <!-- countersinks -->
                <g clip-path="url(#sink_a)">
                    <path d="M345 420h92v72h-92z" fill="#7b4139" />
                    <ellipse cx="391" cy="459" rx="41.5" ry="30" class="ticks" stroke-width="15" />
                    <ellipse cx="391.5" cy="463" rx="38.5" ry="27" fill="#a06b62" class="outline" />
                    <ellipse cx="392" cy="466" rx="33" ry="23.5" class="ticks" stroke-width="11" />
                    <ellipse cx="392" cy="469" rx="27.5" ry="20.5" fill="#a4564c" class="outline" />
                </g>
                <ellipse cx="392.5" cy="468.5" rx="24.5" ry="18.5" fill="url(#wall)" class="outline" />
                <ellipse cx="394" cy="480.5" rx="24.5" ry="18.5" fill="#353838" class="outline" clip-path="url(#sink_a_in)" />
                <ellipse cx="390.7" cy="455.7" rx="44.5" ry="33.7" class="edge" />

                <g clip-path="url(#sink_b)">
                    <path d="M599 181h72v42h-72z" fill="#7b4139" />
                    <ellipse cx="634.7" cy="204" rx="33" ry="18" class="ticks" stroke-width="11" />
                    <ellipse cx="634.7" cy="210" rx="30.5" ry="15.5" fill="#a06b62" class="outline" />
                    <ellipse cx="634" cy="212" rx="26" ry="13" class="ticks" stroke-width="8" />
                    <ellipse cx="633.5" cy="214" rx="21" ry="12" fill="#a4564c" class="outline" />
                    <ellipse cx="633.5" cy="214" rx="18.5" ry="10.5" fill="url(#wall)" class="outline" />
                    <ellipse cx="634" cy="225" rx="18.5" ry="10" fill="#353838" class="outline" clip-path="url(#sink_b_in)" />
                </g>
                <ellipse cx="634.7" cy="202" rx="34.7" ry="20.3" class="edge" />

                <!-- view cube -->
                <ellipse cx="903.5" cy="175" rx="20" ry="15" fill="#2c2e32" stroke="#7d8187" stroke-width="4" />
                <path d="M891 157L905 152L917 160L915 176L901 181L894 172z" fill="#989898" />
                <path d="M891 157L905 152L917 160L900 165z" fill="#a5a5a5" />
                <path d="M891 157L900 165L901 181L894 172z" fill="#858585" />
                <text x="899" y="161" class="cube">TOP</text>
                <text x="901" y="176" class="cube" transform="rotate(-14 901 176)">FRONT</text>
                <text x="879" y="184" class="compass">W</text>
                <text x="912" y="193" class="compass">S</text>

                <!-- world axis tripod -->
                <path d="M60 580l-4-8" stroke="#207020" stroke-width="1.5" />
                <path d="M61 580l1-10" stroke="#22228c" stroke-width="1.5" />
                <path d="M62 581l15-6" stroke="#862222" stroke-width="1.5" />
                <text x="54" y="572" class="tripod" fill="#207020">Y</text>
                <text x="60" y="570" class="tripod" fill="#2424a0">Z</text>
                <text x="75" y="577" class="tripod" fill="#862222">X</text>
            </svg>
            <div class="viewport_label">
                <span>[+]</span><span>[Perspective ]</span><span>[Standard ]</span><span>[Clay + Edged Faces ]</span>
            </div>
            <table class="stats">
                <tr><td></td><th>Total</th></tr>
                <tr><th>Polys:</th><td>83 610</td></tr>
                <tr><th>Verts:</th><td>67 226</td></tr>
                <tr class="fps"><th>FPS:</th><td>0,359</td></tr>
            </table>
        </section>

        <aside class="command_panel">
            <div class="panel_tabs">
                <button class="selected" aria-label="Create"><svg viewBox="0 0 14 14"><path d="M7 2v10M2 7h10" class="line wide" /></svg></button>
                <button aria-label="Modify"><svg viewBox="0 0 14 14"><path d="M2 2h10v10H2z" fill="none" stroke="#3d8f8c" stroke-dasharray="2 1" /><path d="M5 11q0-6 5-6" class="line wide" /></svg></button>
                <button aria-label="Hierarchy"><svg viewBox="0 0 14 14"><path d="M3 2h8v4H3z" fill="#aaa" /><path d="M7 6v3M3 12V9h8v3M1 12h4M9 12h4" fill="none" stroke="#3d8f8c" stroke-width="1.5" /></svg></button>
                <button aria-label="Motion"><svg viewBox="0 0 14 14"><circle cx="5" cy="7" r="4" fill="none" stroke="#3d8f8c" /><circle cx="8.5" cy="7" r="4.5" fill="#aaa" /></svg></button>
                <button aria-label="Display"><svg viewBox="0 0 14 14"><path d="M1 3h12v7H1zM5 11h4v1H5z" fill="#b4b4b4" /></svg></button>
                <button aria-label="Utilities"><svg viewBox="0 0 14 14"><path d="M6 6l6 6" class="line bold" /><path d="M2 4l3-2 3 3-2 3-3-1 1-2z" fill="#b4b4b4" /></svg></button>
            </div>
            <div class="categories">
                <button class="selected" aria-label="Geometry"><svg viewBox="0 0 12 12"><circle cx="6" cy="6" r="5" fill="#e8eef6" /></svg></button>
                <button aria-label="Shapes"><svg viewBox="0 0 12 12"><circle cx="4" cy="4" r="3" fill="#888" stroke="#ddd" /><path d="M5 6h5v5H5z" fill="#e0e0e0" /><path d="M6 5l4 0v4" fill="none" stroke="#ddd" /></svg></button>
                <button aria-label="Lights"><svg viewBox="0 0 12 12"><circle cx="6" cy="4" r="3.5" fill="#ddd" /><path d="M5 7h2v5H5z" fill="#ddd" /></svg></button>
                <button aria-label="Cameras"><svg viewBox="0 0 12 12"><path d="M1 2h7v8H1zM9 5l3-2v6L9 7z" fill="#ddd" /></svg></button>
                <button aria-label="Helpers"><svg viewBox="0 0 12 12"><path d="M2 1v9h9zM2 6q3 0 4 4" class="line wide" /></svg></button>
                <button aria-label="Space Warps"><svg viewBox="0 0 12 12"><path d="M1 3q3 2 5 0t5 0M1 6q3 2 5 0t5 0M1 9q3 2 5 0t5 0" class="line" /></svg></button>
                <button aria-label="Systems"><svg viewBox="0 0 12 12"><circle cx="3.5" cy="4" r="2" class="line" /><circle cx="8.5" cy="8" r="2.5" class="line" /><path d="M5 2l4 2" class="line" /></svg></button>
            </div>
            <span class="combo object_combo"><select aria-label="Object category"><option>Compound Objects</option></select></span>
            <section class="rollout">
                <h2><i class="down"></i>Object Type<i class="dots"></i></h2>
                <label class="autogrid"><input type="checkbox" disabled> AutoGrid</label>
                <div class="object_types">
                    <button disabled>Morph</button>
                    <button disabled>Scatter</button>
                    <button disabled>Conform</button>
                    <button disabled>Connect</button>
                    <button>BlobMesh</button>
                    <button disabled>ShapeMerge</button>
                    <button disabled>Terrain</button>
                    <button disabled>Loft</button>
                    <button>Mesher</button>
                    <button disabled>ProBoolean</button>
                    <button disabled>ProCutter</button>
                    <button disabled>Boolean</button>
                </div>
            </section>
            <section class="rollout">
                <h2><i class="down"></i>Name and Color<i class="dots"></i></h2>
                <div class="name_row">
                    <input type="text" aria-label="Object name" disabled>
                    <button aria-label="Object color"></button>
                </div>
            </section>
        </aside>
    </main>

    <div class="trackbar">
        <i class="grip"></i>
        <div class="time_slider">
            <button>&lt;</button>
            <button class="frame">100 / 100</button>
            <button>&gt;</button>
        </div>
    </div>

    <footer class="statusbar">
        <div class="listener"><span></span></div>
        <span class="prompt">None Selected</span>
        <div class="coords">
            <button aria-label="Isolate"><svg viewBox="0 0 12 12"><path d="M3 3h6v6H3zM1 1l2 2M11 1L9 3M1 11l2-2M11 11L9 9" fill="none" stroke="#292929" stroke-width="1.5" /></svg></button>
            <button aria-label="Selection lock"><svg viewBox="0 0 12 12"><path d="M3 5h6v6H3z" fill="#2d2d2d" /><path d="M4 5V3q2-3 4 0v2" fill="none" stroke="#2d2d2d" /><path d="M6 7v2" stroke="#888" /></svg></button>
            <button aria-label="Absolute mode"><svg viewBox="0 0 12 12"><path d="M1.5 1.5h9v9h-9z" class="line" stroke-dasharray="3 2" /><circle cx="6" cy="6" r="2.5" class="line wide" /><path d="M6 1v3M6 8v3M1 6h3M8 6h3" class="line" /></svg></button>
            <label>X: <input type="text" value="508,567mm" disabled></label>
            <label>Y: <input type="text" value="-57,43mm" disabled></label>
            <label>Z: <input type="text" value="0,0mm" disabled></label>
            <span>Grid = 10,0mm</span>
        </div>
        <div class="transport">
            <button aria-label="Go to start"><svg viewBox="0 0 12 12"><path d="M1 3v6M6 3v6L2 6zM11 3v6L7 6z" /></svg></button>
            <button aria-label="Previous frame"><svg viewBox="0 0 12 12"><path d="M6 3v6L2 6zM8 3v6M10 3v6" /></svg></button>
            <button aria-label="Play"><svg viewBox="0 0 12 12"><path d="M2 1v10l8-5z" /></svg></button>
            <button aria-label="Next frame"><svg viewBox="0 0 12 12"><path d="M2 3v6M4 3v6M6 3v6l4-3z" /></svg></button>
            <button aria-label="Go to end"><svg viewBox="0 0 12 12"><path d="M1 3v6l4-3zM6 3v6l4-3zM11 3v6" /></svg></button>
        </div>
        <button class="set_key" aria-label="Set Keys"><svg viewBox="0 0 20 16"><path d="M8 4v12M2 11h13" stroke="#e8e8e8" stroke-width="3" /><path d="M15 16q0-3 3-3" fill="none" stroke="#54c4c0" stroke-width="1.5" /></svg></button>
        <div class="keys">
            <button>Auto Key</button>
            <span class="combo"><select aria-label="Key target"><option>Selected</option></select></span>
        </div>
        <div class="nav_tools">
            <button aria-label="Zoom"><svg viewBox="0 0 12 12"><circle cx="7" cy="5" r="3.5" class="line wide" /><path d="M4 8l-3 3" class="line wide" /></svg></button>
            <button aria-label="Zoom All"><svg viewBox="0 0 12 12"><path d="M4 1h7v6H4z" fill="#2f7f7c" stroke="#4cb9b4" stroke-width="2" stroke-dasharray="2 1" /><path d="M5 7l-4 4" class="line wide" /></svg></button>
            <button aria-label="Zoom Extents"><svg viewBox="0 0 12 12"><path d="M3 4l3-1 3 1v4l-3 2-3-2z" fill="#4cc9c2" /><path d="M1 4V1h3M8 1h3v3M1 8v3h3" class="line" /><path d="M12 9v3H9z" fill="#eee" /></svg></button>
            <button aria-label="Field of View"><svg viewBox="0 0 12 12"><path d="M8 1L1 7l7 2z" fill="#3a9c98" /><circle cx="8" cy="5" r="2.5" class="line wide" /><path d="M12 9v3H9z" fill="#eee" /></svg></button>
        </div>
    </footer>
</body>

</html>
```
FILE: styles.css
```css
* {
    box-sizing: border-box;
}

body {
    margin: 0;
    height: 100vh;
    display: flex;
    flex-direction: column;
    overflow: hidden;
    background: #444;
    color: #e0e0e0;
    font: 8px/10px Lato, "Open Sans", sans-serif;
}

button,
input,
select {
    margin: 0;
    padding: 0;
    border: none;
    background: none;
    color: inherit;
    font: inherit;
    white-space: nowrap;
}

button {
    display: flex;
    align-items: center;
    justify-content: center;
}

a {
    color: inherit;
    text-decoration: none;
}

svg {
    display: block;
}

.defs {
    position: absolute;
}

.line {
    fill: none;
    stroke: #d8d8d8;
}

.wide {
    stroke-width: 1.5;
}

.bold {
    stroke-width: 2.5;
}

.down {
    display: inline-block;
    border: 3px solid transparent;
    border-top-color: #e0e0e0;
    border-bottom: none;
}

/* title and menu */

.titlebar {
    flex: none;
    display: flex;
    align-items: center;
    height: 15px;
    padding: 0 12px 2px 2px;
    background: #fff;
    color: #222;
}

.logo {
    width: 10px;
    height: 11px;
    margin-right: 3px;
}

.window_buttons {
    display: flex;
    gap: 21px;
    margin-left: auto;
}

.window_buttons svg {
    width: 8px;
    height: 8px;
    fill: none;
    stroke: #222;
}

.menubar {
    flex: none;
    display: flex;
    align-items: center;
    gap: 17px;
    height: 14px;
    padding: 0 3px 2px 8px;
    background: linear-gradient(#575757, #414141);
    white-space: nowrap;
}

.menubar label {
    margin-left: auto;
    color: #bbb;
}

.combo {
    position: relative;
    display: block;
    height: 13px;
    background: #5c5c5c;
}

.combo select {
    display: block;
    width: 100%;
    height: 100%;
    padding: 0 0 0 3px;
    appearance: none;
    overflow: hidden;
    line-height: 11px;
}

.combo::after {
    content: "";
    position: absolute;
    right: 4px;
    top: 5px;
    border: 2px solid transparent;
    border-top: 3px solid #e0e0e0;
    border-bottom: none;
    pointer-events: none;
}

.workspace {
    width: 86px;
    height: 12px;
    margin-left: -13px;
    background: #4c4c4c;
    color: #ccc;
}

/* main toolbar */

.toolbar {
    flex: none;
    display: grid;
    grid-template-columns: 5px 42px 4px 61px 48px 84px 4px 82px 44px 21px 4px 41px 4px 83px 4px 20px 77px 4px 41px 4px 41px 4px 62px 4px 20px 4px 227px 5px 42px;
    align-items: center;
    height: 22px;
    padding-bottom: 1px;
    border-top: 1px solid #303030;
    background: #444;
    overflow: hidden;
}

.toolbar .combo {
    margin: 0 1px 3px;
}

.toolbar .combo:nth-child(5) {
    margin-left: 5px;
}

.toolbar .combo select {
    padding-left: 1px;
    color: #c4c4c4;
}

.group {
    display: flex;
    justify-content: space-around;
}

.group button {
    width: 20px;
    height: 20px;
}

.group svg {
    flex: none;
    width: 18px;
    height: 18px;
}

.group .active {
    border: 1px solid #7fa5d6;
    border-radius: 2px;
    background: #4f77ad;
}

.sep {
    justify-self: center;
    width: 1px;
    height: 10px;
    background: #222;
}

.grip {
    justify-self: center;
    width: 2px;
    height: 18px;
    background: #666;
}

.badge {
    fill: #fff;
    font-size: 9px;
    font-weight: 700;
    text-anchor: middle;
}

.qr {
    fill: #3c86d6;
    font-size: 8px;
}

.axis {
    font-size: 7px;
    font-weight: 900;
    text-anchor: middle;
}

/* work area */

.workspace_area {
    flex: 1;
    min-height: 0;
    display: grid;
    grid-template-columns: 44px 1fr 140px;
    grid-template-rows: 80px 1fr;
}

.side_tools {
    grid-row: 1 / 3;
    display: grid;
    grid-template-columns: 22px 22px;
    align-items: start;
    padding-top: 1px;
}

.side_column {
    display: flex;
    flex-direction: column;
    align-items: center;
    gap: 4px;
}

.side_column svg {
    width: 16px;
    height: 16px;
}

.bar {
    width: 18px;
    height: 2px;
    background: #686868;
}

.ribbon {
    grid-column: 2 / 4;
    display: flex;
    flex-direction: column;
    align-items: flex-start;
    margin: 0 0 3px 2px;
    border-left: 2px solid #666;
    background: linear-gradient(#464646, #383838);
}

.tabs {
    align-self: stretch;
    display: flex;
    align-items: stretch;
    height: 13px;
    margin-left: 2px;
    border-bottom: 1px solid #3c3c3c;
    background: #515151;
    color: #aaa;
    line-height: 13px;
}

.tabs a {
    margin-right: 14px;
    padding: 0 7px;
}

.tabs a:first-child {
    margin-right: 0;
}

.tabs .selected {
    margin-right: 6px;
    padding: 0 5px 0 12px;
    border: 1px solid #707070;
    border-bottom: none;
    background: #606060;
    color: #e8e8e8;
    font-weight: 700;
    line-height: 12px;
}

.tabs .toggle svg {
    width: 18px;
    height: 6px;
}

.panel {
    flex: 1;
    display: flex;
    flex-direction: column;
    width: 142px;
    margin: 0 0 2px 2px;
    background: #5a5a5a;
}

.panel_tools {
    flex: 1;
    display: flex;
    gap: 3px;
    padding: 2px 3px 2px 2px;
}

.poly_tools {
    display: flex;
    flex-direction: column;
    justify-content: space-between;
    width: 99px;
    margin-right: 2px;
    border-right: 1px solid #4a4a4a;
}

.strip {
    display: flex;
}

.strip button {
    width: 19px;
    height: 15px;
    border: 1px solid #4a4a4a;
    background: #656565;
}

.strip svg {
    width: 13px;
    height: 13px;
}

.lower button {
    width: 16px;
}

.lower .spaced {
    margin: 0 2px;
}

.lower .large {
    width: 26px;
}

.stack {
    flex-direction: column;
    justify-content: center;
    gap: 1px;
}

.stack button {
    width: 15px;
}

.strip .blue {
    border-color: #83abd6;
    background: #4674aa;
}

.panel_title {
    height: 12px;
    background: #484848;
    color: #eee;
    font-weight: 700;
    line-height: 11px;
    text-align: center;
}

/* viewport */

.viewport {
    position: relative;
    min-width: 0;
    min-height: 0;
    border: 1px solid #77673a;
    background: #353535;
}

.scene {
    width: 100%;
    height: 100%;
}

.edge {
    fill: none;
    stroke: #3a110d;
    stroke-width: .8;
}

.outline {
    stroke: #41150f;
    stroke-width: .8;
}

.ticks {
    fill: none;
    stroke: #4a2019;
    stroke-dasharray: .7 2.7;
}

.cube {
    fill: #777;
    font-size: 4px;
}

.compass {
    fill: #a5a5a5;
    font-size: 7px;
}

.tripod {
    font-size: 5px;
}

.viewport_label {
    position: absolute;
    left: 2px;
    top: 3px;
    display: flex;
    gap: 1px;
    color: #d4d4d4;
}

.stats {
    position: absolute;
    left: 8px;
    top: 23px;
    border-collapse: collapse;
    color: #d0bf3c;
    line-height: 10px;
}

.stats th,
.stats td {
    padding: 0 6px 0 0;
    font-weight: 400;
    text-align: left;
}

.stats .fps th,
.stats .fps td {
    padding-top: 11px;
}

/* command panel */

.command_panel {
    display: flex;
    flex-direction: column;
    margin: 1px 0 0 4px;
    padding: 3px 3px 0 1px;
    border-top: 2px solid #606060;
    border-bottom: 1px solid #3a3a3a;
}

.panel_tabs {
    display: flex;
    height: 17px;
    margin-bottom: 2px;
}

.panel_tabs button {
    width: 21px;
    border: 1px solid #3d3d3d;
}

.panel_tabs .selected {
    margin-left: -3px;
    border-color: #444;
}

.panel_tabs svg {
    width: 13px;
    height: 13px;
}

.categories {
    display: flex;
    gap: 1px;
    height: 14px;
    margin: 0 0 5px 1px;
}

.categories button {
    width: 13px;
}

.categories svg {
    width: 11px;
    height: 11px;
}

.categories .selected {
    border: 1px solid #7fa5d6;
    background: #4f77ad;
}

.object_combo {
    height: 12px;
    margin-bottom: 4px;
    background: #606060;
}

.rollout {
    margin: 0 6px 3px 1px;
    padding: 1px 16px 3px;
    background: #4f4f4f;
}

.rollout h2 {
    display: flex;
    align-items: center;
    gap: 4px;
    margin: 0 -12px;
    color: #f0f0f0;
    font-size: 8px;
    line-height: 11px;
}

.rollout .down {
    border-width: 3px 2px 0;
}

.dots {
    width: 4px;
    height: 4px;
    margin-left: auto;
    background: #636363;
}

.autogrid {
    display: flex;
    align-items: center;
    gap: 3px;
    height: 14px;
    padding-left: 16px;
    color: #8c8c8c;
}

.autogrid input {
    width: 6px;
    height: 6px;
    appearance: none;
    background: #5c5c5c;
}

.object_types {
    display: grid;
    grid-template-columns: 1fr 1fr;
    grid-template-rows: repeat(6, 1fr);
    gap: 3px 7px;
    height: 78px;
}

.object_types button {
    border-radius: 1px;
    background: #656565;
    color: #f4f4f4;
    font-weight: 700;
    min-height: 0;
}

.object_types button:disabled {
    background: #565656;
    color: #8a8a8a;
    font-weight: 400;
}

.name_row {
    display: flex;
    gap: 3px;
    padding: 5px 0 4px;
}

.name_row input {
    flex: 1;
    min-width: 0;
    height: 12px;
    background: #585858;
}

.name_row button {
    width: 11px;
    height: 12px;
    border: 1px solid #333;
    background: #a5a5a5;
}

/* time slider and status bar */

.trackbar {
    flex: none;
    display: flex;
    align-items: center;
    justify-content: space-between;
    height: 17px;
    padding: 0 3px 0 45px;
}

.trackbar .grip {
    height: 8px;
}

.time_slider {
    display: flex;
    gap: 2px;
}

.time_slider button {
    width: 9px;
    height: 11px;
    background: #575757;
}

.time_slider .frame {
    width: 78px;
    background: #606060;
}

.statusbar {
    flex: none;
    display: flex;
    height: 18px;
    padding-left: 3px;
    overflow: hidden;
}

.listener {
    width: 63px;
    background: #fff;
    border: 1px solid #8a8a8a;
    border-right: 2px solid #ddd;
}

.listener span {
    display: block;
    height: 14px;
    border-bottom: 1px solid #777;
    background: #dcc3c5;
}

.prompt {
    margin-left: 5px;
    line-height: 16px;
}

.coords {
    display: flex;
    align-items: center;
    gap: 7px;
    height: 16px;
    margin-left: auto;
}

.coords svg,
.transport svg,
.nav_tools svg {
    width: 11px;
    height: 11px;
}

.coords label {
    display: flex;
    align-items: center;
    gap: 2px;
}

.coords input {
    width: 37px;
    height: 11px;
    padding: 0 0 0 1px;
    background: #585858;
    color: #868686;
}

.transport {
    display: flex;
    gap: 5px;
    height: 16px;
    margin: 0 9px 0 23px;
}

.transport svg {
    fill: #e0e0e0;
    stroke: #e0e0e0;
    stroke-width: .6;
}

.set_key {
    width: 27px;
    margin-top: 1px;
    background: #606060;
}

.set_key svg {
    width: 20px;
    height: 16px;
}

.keys {
    display: flex;
    gap: 3px;
    margin: 1px 7px 0 3px;
}

.keys button {
    width: 30px;
    height: 12px;
    background: #5c5c5c;
}

.keys .combo {
    width: 73px;
    height: 12px;
}

.nav_tools {
    display: flex;
    gap: 4px;
    height: 16px;
    margin-right: 7px;
}
```
